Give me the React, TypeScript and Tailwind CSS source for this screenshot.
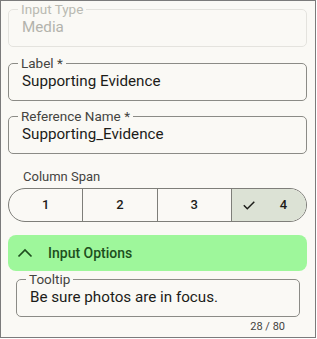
import React from "react";

function Field({ label, value, disabled, className = "" }: { label: string; value: string; disabled?: boolean; className?: string }) {
  return (
    <fieldset
      className={`rounded-[5px] border px-[13px] pb-[9px] ${disabled ? "border-[#e4e3de]" : "border-[#8b8b86]"} ${className}`}
    >
      <legend className={`ml-[-4px] px-[3px] text-[13.5px] leading-[14px] ${disabled ? "text-[#b9b9b2]" : "text-[#44443f]"}`}>
        {label}
      </legend>
      <div className={`mt-[1px] text-[15.2px] leading-[20px] ${disabled ? "text-[#b3b3ac]" : "text-[#1c1c19]"}`}>{value}</div>
    </fieldset>
  );
}

export default function App() {
  return (
    <div
      className="w-[316px] h-[338px] border border-[#7b7b7b] bg-[#faf9f5] pl-[7px] pr-[8px] pt-[1px]"
      style={{ fontFamily: "Roboto, 'Noto Sans', sans-serif" }}
    >
      <Field label="Input Type" value="Media" disabled />
      <Field label="Label *" value="Supporting Evidence" className="mt-[9px]" />
      <Field label="Reference Name *" value="Supporting_Evidence" className="mt-[8px]" />
      <div className="mt-[15px] pl-[15px] text-[13px] leading-[16px] text-[#44443f]">Column Span</div>
      <div className="mt-[3px] grid h-[34px] grid-cols-4 overflow-hidden rounded-full border border-[#7e7e79]">
        {["1", "2", "3"].map((n) => (
          <div key={n} className="flex items-center justify-center border-r border-[#7e7e79] text-[13px] font-medium text-[#1c1c19]">
            {n}
          </div>
        ))}
        <div className="flex items-center justify-start gap-[25px] bg-[#dce2d5] pl-[11px] text-[13px] font-medium text-[#1c1c19]">
          <svg width="12" height="9" viewBox="0 0 12 9" fill="none">
            <path d="M0.8 4.2 L4.3 7.8 L11.3 0.8" stroke="#1c1c19" strokeWidth="1.5" />
          </svg>
          <span>4</span>
        </div>
      </div>
      <div className="mt-[13px] flex h-[36px] items-center rounded-[8px] bg-[#9ef79b] pl-[9px]">
        <svg width="16" height="10" viewBox="0 0 16 10" fill="none">
          <path d="M1.5 8.5 L8 2 L14.5 8.5" stroke="#1f4d1f" strokeWidth="1.7" />
        </svg>
        <span className="ml-[15px] text-[14px] font-medium text-[#1d4f1d]">Input Options</span>
      </div>
      <div className="pl-[8px] pr-[7px]">
        <Field label="Tooltip" value="Be sure photos are in focus." className="mt-[1px]" />
        <div className="mt-[3px] pr-[15px] text-right text-[11px] leading-[13px] text-[#44443f]">28 / 80</div>
      </div>
    </div>
  );
}
